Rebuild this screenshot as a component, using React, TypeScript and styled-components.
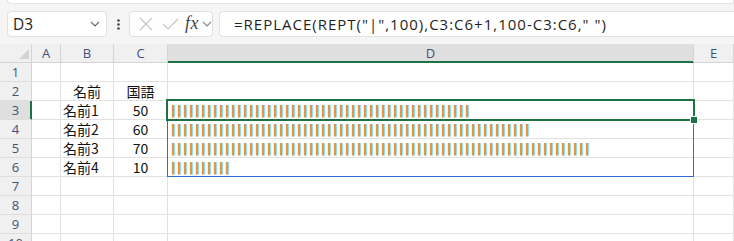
import React from "react";
import styled, { createGlobalStyle } from "styled-components";

const Global = createGlobalStyle`
  html, body { margin: 0; padding: 0; background: #ffffff; }
  body { width: 734px; height: 241px; overflow: hidden; font-family: "Open Sans", "Noto Sans", sans-serif; }
`;

const Page = styled.div`
  width: 734px;
  height: 241px;
  overflow: hidden;
  background: #ffffff;
`;

const FormulaArea = styled.div`
  height: 44px;
  background: #f5f5f5;
  display: flex;
  flex-direction: column;
`;

const RibbonEdge = styled.div`
  height: 3px;
  margin-left: 7px;
  background: #ffffff;
  border: 1px solid #e2e2e2;
  border-top: none;
  border-bottom-left-radius: 6px;
`;

const BarRow = styled.div`
  display: flex;
  align-items: center;
  margin-top: 7px;
  height: 26px;
  padding-left: 7px;
`;

const Box = styled.div`
  height: 26px;
  box-sizing: border-box;
  background: #ffffff;
  border: 1px solid #e1e1e1;
  border-radius: 4px;
  display: flex;
  align-items: center;
`;

const NameBox = styled(Box)`
  width: 100px;
  justify-content: space-between;
  padding: 0 6px 0 5px;
  font-size: 15.5px;
  color: #1f1f1f;
`;

const Dots = styled.div`
  width: 22px;
  display: flex;
  justify-content: center;
  align-items: center;
`;

const FnBox = styled(Box)`
  width: 84px;
  padding: 0 0 0 4px;
`;

const IconSlot = styled.div<{ $w: number }>`
  width: ${(p) => p.$w}px;
  height: 24px;
  display: flex;
  align-items: center;
  justify-content: center;
`;

const FxText = styled.span`
  font-family: "Liberation Serif", "DejaVu Serif", serif;
  font-style: italic;
  font-size: 18px;
  color: #454545;
  letter-spacing: 0.5px;
  margin-top: -2px;
`;

const FormulaBox = styled(Box)`
  flex: 1;
  margin-left: 6px;
  margin-right: -8px;
  padding-left: 14px;
  font-size: 15px;
  letter-spacing: 1px;
  color: #1f1f1f;
  white-space: nowrap;
`;

const Sheet = styled.div`
  position: relative;
  display: grid;
  grid-template-columns: 32px 29px 53px 54px 526px 1fr;
  grid-auto-rows: 19px;
`;

const HeaderBase = styled.div`
  box-sizing: border-box;
  background: #f0f0f0;
  border-right: 1px solid #d4d4d4;
  border-bottom: 1px solid #d4d4d4;
  display: flex;
  align-items: center;
  font-size: 13px;
  color: #3f5278;
`;

const Corner = styled(HeaderBase)`
  justify-content: flex-end;
  align-items: flex-end;
  padding: 0 2px 3px 0;
`;

const ColHeader = styled(HeaderBase)<{ $selected?: boolean }>`
  justify-content: center;
  background: ${(p) => (p.$selected ? "#dfdfdf" : "#f0f0f0")};
  ${(p) =>
    p.$selected
      ? "border-bottom-color: #1e7145; box-shadow: inset 0 -1px 0 #1e7145;"
      : ""}
`;

const RowHeader = styled(HeaderBase)<{ $selected?: boolean }>`
  justify-content: center;
  border-bottom-color: #dedede;
  background: ${(p) => (p.$selected ? "#dfdfdf" : "#f0f0f0")};
  ${(p) =>
    p.$selected
      ? "border-right-color: #1e7145; box-shadow: inset -1px 0 0 #1e7145;"
      : ""}
`;

const Cell = styled.div<{ $align?: "left" | "center" }>`
  box-sizing: border-box;
  border-right: 1px solid #e1e1e1;
  border-bottom: 1px solid #e1e1e1;
  display: flex;
  align-items: center;
  justify-content: ${(p) => (p.$align === "center" ? "center" : "flex-start")};
  padding-left: ${(p) => (p.$align === "center" ? "0" : "2px")};
  font-family: "Noto Sans CJK JP", "Noto Sans", sans-serif;
  font-size: 14px;
  color: #111111;
  white-space: nowrap;
  overflow: hidden;
`;

const Bars = styled.span`
  font-family: "DejaVu Sans Mono", "Liberation Mono", monospace;
  font-size: 13px;
  letter-spacing: calc(6px - 0.60205em);
  color: #e0820f;
  text-shadow: 1px 0 0 #3f7fd4;
  margin-left: -1.37px;
`;

const SpillBox = styled.div`
  position: absolute;
  left: 167px;
  top: 56px;
  width: 527px;
  height: 77px;
  box-sizing: border-box;
  border: 1px solid #2d6cd2;
  pointer-events: none;
`;

const ActiveBox = styled.div`
  position: absolute;
  left: 166px;
  top: 55px;
  width: 529px;
  height: 22px;
  box-sizing: border-box;
  border: 2px solid #1e7145;
  pointer-events: none;
`;

const FillHandle = styled.div`
  position: absolute;
  left: 690px;
  top: 72px;
  width: 8px;
  height: 8px;
  box-sizing: border-box;
  background: #1e7145;
  border: 1px solid #ffffff;
`;

const Chevron = ({ color = "#6b6b6b" }: { color?: string }) => (
  <svg width="10" height="6" viewBox="0 0 10 6">
    <path d="M1 1 L5 5 L9 1" fill="none" stroke={color} strokeWidth="1.2" />
  </svg>
);

const cols = ["A", "B", "C", "D", "E"];

type RowData = { b?: string; bAlign?: "left" | "center"; c?: string; bars?: number };

const rows: RowData[] = [
  {},
  { b: "名前", bAlign: "center", c: "国語" },
  { b: "名前1", c: "50", bars: 50 },
  { b: "名前2", c: "60", bars: 60 },
  { b: "名前3", c: "70", bars: 70 },
  { b: "名前4", c: "10", bars: 10 },
  {},
  {},
  {},
  {},
];

export default function App() {
  return (
    <Page>
      <Global />
      <FormulaArea>
        <RibbonEdge />
        <BarRow>
          <NameBox>
            <span>D3</span>
            <Chevron />
          </NameBox>
          <Dots>
            <svg width="3" height="11" viewBox="0 0 3 11">
              <circle cx="1.5" cy="1.5" r="1.3" fill="#444" />
              <circle cx="1.5" cy="5.5" r="1.3" fill="#444" />
              <circle cx="1.5" cy="9.5" r="1.3" fill="#444" />
            </svg>
          </Dots>
          <FnBox>
            <IconSlot $w={24}>
              <svg width="14" height="14" viewBox="0 0 14 14">
                <path d="M1 1 L13 13 M13 1 L1 13" stroke="#c6c6c6" strokeWidth="1.2" fill="none" />
              </svg>
            </IconSlot>
            <IconSlot $w={24}>
              <svg width="17" height="12" viewBox="0 0 17 12">
                <path d="M1 6 L6 11 L16 1" stroke="#c6c6c6" strokeWidth="1.2" fill="none" />
              </svg>
            </IconSlot>
            <IconSlot $w={20}>
              <FxText>fx</FxText>
            </IconSlot>
            <IconSlot $w={10}>
              <Chevron color="#8a8a8a" />
            </IconSlot>
          </FnBox>
          <FormulaBox>=REPLACE(REPT("|",100),C3:C6+1,100-C3:C6," ")</FormulaBox>
        </BarRow>
      </FormulaArea>
      <Sheet>
        <Corner>
          <svg width="10" height="10" viewBox="0 0 10 10">
            <polygon points="10,0 10,10 0,10" fill="#d3d3d3" />
          </svg>
        </Corner>
        {cols.map((c) => (
          <ColHeader key={c} $selected={c === "D"}>
            {c}
          </ColHeader>
        ))}
        {rows.map((r, i) => (
          <React.Fragment key={i}>
            <RowHeader $selected={i === 2}>{i + 1}</RowHeader>
            <Cell />
            <Cell $align={r.bAlign ?? "left"}>{r.b}</Cell>
            <Cell $align="center">{r.c}</Cell>
            <Cell>{r.bars ? <Bars>{"|".repeat(r.bars)}</Bars> : null}</Cell>
            <Cell />
          </React.Fragment>
        ))}
        <SpillBox />
        <ActiveBox />
        <FillHandle />
      </Sheet>
    </Page>
  );
}
